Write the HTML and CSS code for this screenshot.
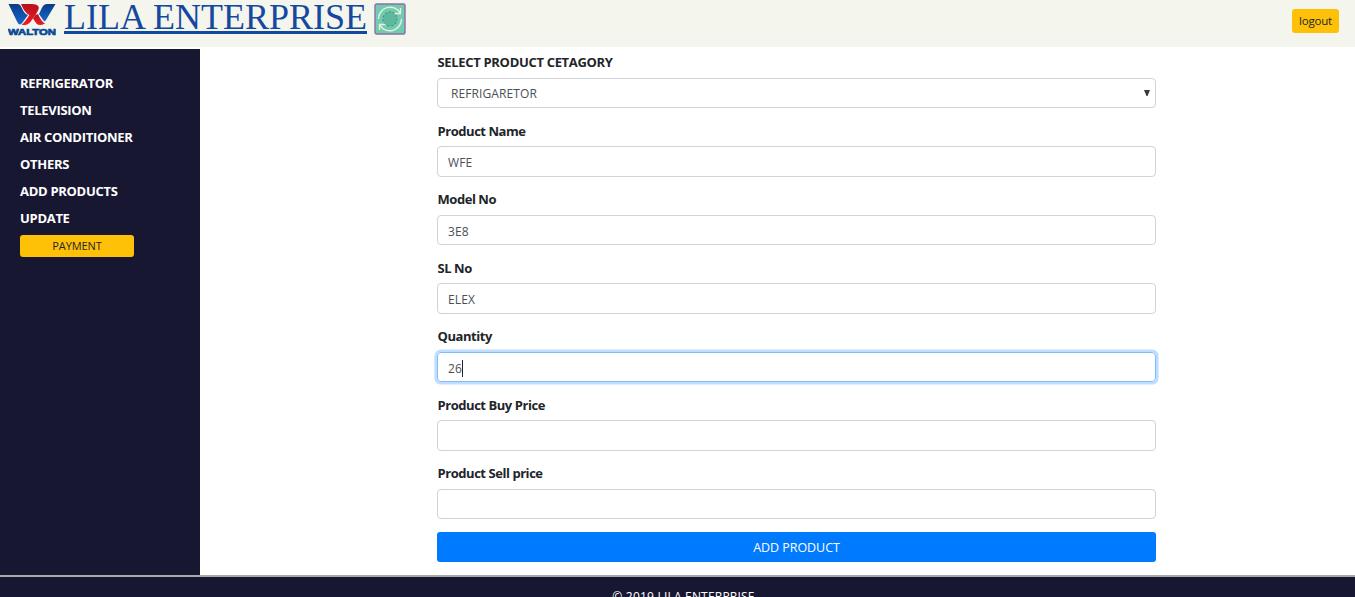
FILE: index.html
```html
<!DOCTYPE html>
<html lang="en">
<head>
<meta charset="utf-8">
<title>LILA ENTERPRISE</title>
<link rel="stylesheet" href="styles.css">
</head>
<body>
<header class="topbar">
  <svg class="logo" width="50" height="36" viewBox="0 0 50 36">
    <defs>
      <linearGradient id="blue" x1="0" y1="0" x2="0" y2="1"><stop offset="0" stop-color="#0c3a86"/><stop offset="1" stop-color="#1468ce"/></linearGradient>
      <linearGradient id="red" x1="0" y1="0" x2="0" y2="1"><stop offset="0" stop-color="#b5121b"/><stop offset="1" stop-color="#ef1c2b"/></linearGradient>
    </defs>
    <path fill="url(#blue)" d="M.5 2H9.500C13 2 14 7 16 10Q17.500 12.500 20 13L14.500 20.500Q11.500 25 9 19.500Z"/>
    <path fill="url(#blue)" d="M47.500 2H39C35 2 34 6 32 10L31 12L35.500 18.500Q37 20 38 18Z"/>
    <path fill="url(#red)" d="M13 2H24Q33 2 30 8.500L27.500 13L22 20.500Q19.500 23.500 13.500 23Q17 20 21.500 13Q16.500 11 13 2Z"/>
    <path fill="url(#red)" d="M27.500 13L30 12Q33 19.500 37 21.500Q30 25.500 27 19.500L25 16.500Z"/>
    <text class="logo-text" x="0" y="33" textLength="48" lengthAdjust="spacingAndGlyphs">WALTON</text>
  </svg>
  <a class="brand">LILA ENTERPRISE</a>
  <svg class="refresh" width="32" height="32" viewBox="0 0 32 32">
    <rect x="1" y="1" width="30" height="30" rx="1.5" fill="#70cbb0" stroke="#8d70a7" stroke-width="1.4"/>
    <circle cx="16" cy="16" r="7.5" fill="#5cb99b"/>
    <circle cx="16" cy="16" r="7" fill="none" stroke="#587f96" stroke-width="1.4" stroke-dasharray="1.2 2.8"/>
    <g fill="none" stroke="#e9efda" stroke-width="1.4">
      <path d="M4.500 16A11.700 11.700 0 0 1 26 9.500M26.500 5V10.500H20.500"/>
      <path d="M27.500 16A11.700 11.700 0 0 1 6 22.500M5.500 27V21.500H11.500"/>
    </g>
  </svg>
  <button class="logout">logout</button>
</header>
<div class="content">
  <nav class="sidebar">
    <a>REFRIGERATOR</a>
    <a>TELEVISION</a>
    <a>AIR CONDITIONER</a>
    <a>OTHERS</a>
    <a>ADD PRODUCTS</a>
    <a>UPDATE</a>
    <button class="payment">PAYMENT</button>
  </nav>
  <main class="main">
    <form class="form">
      <div class="group"><label class="caps">SELECT PRODUCT CETAGORY</label><div class="field select"><span>REFRIGARETOR</span><svg width="6" height="6" viewBox="0 0 6 6"><path d="M0 0H6L3.500 6H2.500Z" fill="#343a40"/></svg></div></div>
      <div class="group"><label>Product Name</label><div class="field">WFE</div></div>
      <div class="group"><label>Model No</label><div class="field">3E8</div></div>
      <div class="group"><label>SL No</label><div class="field">ELEX</div></div>
      <div class="group"><label>Quantity</label><div class="field focused">26<i class="caret"></i></div></div>
      <div class="group"><label>Product Buy Price</label><div class="field"></div></div>
      <div class="group"><label>Product Sell price</label><div class="field"></div></div>
      <button type="button" class="submit">ADD PRODUCT</button>
    </form>
  </main>
</div>
<footer class="footer">© 2019 LILA ENTERPRISE</footer>
</body>
</html>
```
FILE: styles.css
```css
* { box-sizing: border-box; }
body { margin: 0; height: 597px; overflow: hidden; display: flex; flex-direction: column; background: #fff; color: #212529; font: 13px/20px "Open Sans", "Noto Sans", sans-serif; }
button { border: 0; padding: 0; font: inherit; color: #212529; }
.topbar { height: 47px; flex: none; margin-bottom: 2px; padding: 0 16px 0 8px; display: flex; align-items: flex-start; background: #f4f5ec; }
.logo { margin-top: 2px; flex: none; }
.logo-text { font: 900 9.5px "Liberation Sans", sans-serif; fill: #084a96; stroke: #084a96; stroke-width: .7px; }
.brand { margin-left: 6px; width: 303px; height: 34px; border-bottom: 3px solid #1548a0; color: #1548a0; font: 36px/34px "Liberation Serif", serif; white-space: nowrap; }
.refresh { margin: 3px 0 0 7px; flex: none; }
.logout { margin: 9px 0 0 auto; width: 47px; height: 24px; border-radius: 3px; background: #ffc107; font-size: 11.5px; letter-spacing: -.2px; }
.content { height: 526px; flex: none; display: flex; }
.sidebar { width: 200px; padding: 21px 20px; display: flex; flex-direction: column; align-items: flex-start; background: #181732; }
.sidebar a { height: 27px; line-height: 27px; color: #fff; font-weight: 700; letter-spacing: -.3px; white-space: nowrap; }
.payment { width: 114px; height: 22px; margin-top: 3px; border-radius: 3px; background: #ffc107; font-size: 11px; line-height: 22px; letter-spacing: -.1px; }
.main { flex: 1; padding: 2.7px 199px 0 237px; }
.form { display: flex; flex-direction: column; }
.group { height: 68.55px; display: flex; flex-direction: column; }
.group label { height: 20px; margin-bottom: 6px; padding: .5px 0 0 .5px; font-weight: 700; letter-spacing: -.45px; }
.group .caps { padding-top: 0; letter-spacing: -.32px; }
.field { height: 30.5px; padding: 3px 10px 0; display: flex; align-items: center; border: 1px solid #ced4da; border-radius: 4px; color: #495057; font-size: 12px; letter-spacing: .1px; }
.select { padding: 0 5px 0 13px; justify-content: space-between; }
.select span { padding-top: 2px; }
.focused { border-color: #80bdff; box-shadow: 0 0 0 2.6px #bfdeff; }
.caret { width: 1px; height: 17px; background: #212529; }
.submit { height: 30px; margin-top: .45px; padding-top: 3px; border-radius: 3px; background: #007bff; color: #fff; font-size: 12.5px; letter-spacing: -.05px; }
.footer { height: 22px; flex: none; overflow: hidden; padding: 10px 0 0 12px; border-top: 2px solid #a4aaa8; background: #181732; color: #fff; text-align: center; font-size: 12px; letter-spacing: .2px; }
```
